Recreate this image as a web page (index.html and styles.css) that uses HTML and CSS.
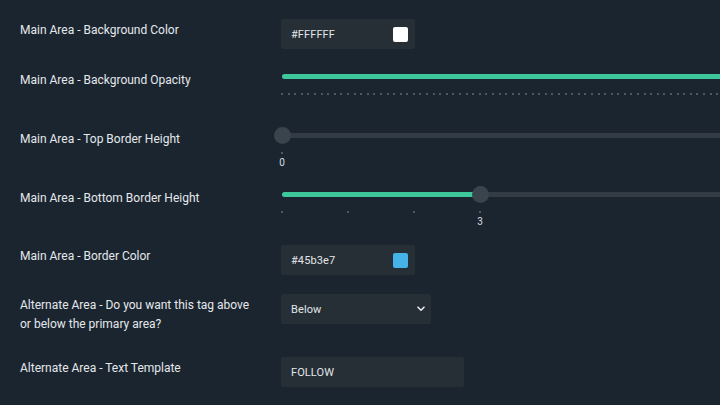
FILE: index.html
```html
<!DOCTYPE html>
<html>
<head>
<meta charset="utf-8">
<link rel="stylesheet" href="styles.css">
</head>
<body>
<div class="form">
  <div class="row">
    <div class="label">Main Area - Background Color</div>
    <div class="control">
      <div class="color-input"><span class="value">#FFFFFF</span><span class="swatch swatch-white"></span></div>
    </div>
  </div>

  <div class="row">
    <div class="label label-slider">Main Area - Background Opacity</div>
    <div class="control">
      <div class="slider">
        <div class="track"><div class="fill" style="width:100%"></div></div>
        <div class="ticks ticks-full" id="ticks-opacity"></div>
      </div>
    </div>
  </div>

  <div class="row">
    <div class="label label-slider">Main Area - Top Border Height</div>
    <div class="control">
      <div class="slider">
        <div class="track"><div class="knob" style="left:0px"></div></div>
        <div class="ticks"><span class="tick"></span></div>
        <div class="tick-labels"><span class="tick-label" style="left:0px">0</span></div>
      </div>
    </div>
  </div>

  <div class="row">
    <div class="label label-slider">Main Area - Bottom Border Height</div>
    <div class="control">
      <div class="slider">
        <div class="track"><div class="fill" style="width:198px"></div><div class="knob" style="left:198px"></div></div>
        <div class="ticks ticks-step"><span class="tick"></span><span class="tick"></span><span class="tick"></span><span class="tick"></span></div>
        <div class="tick-labels"><span class="tick-label" style="left:198px">3</span></div>
      </div>
    </div>
  </div>

  <div class="row row-after-slider">
    <div class="label">Main Area - Border Color</div>
    <div class="control">
      <div class="color-input"><span class="value">#45b3e7</span><span class="swatch swatch-blue"></span></div>
    </div>
  </div>

  <div class="row row-tall">
    <div class="label">Alternate Area - Do you want this tag above or below the primary area?</div>
    <div class="control">
      <div class="select"><span class="value">Below</span>
        <svg class="chevron" width="8" height="6" viewBox="0 0 8 6"><path d="M1 1.2 L4 4.2 L7 1.2" fill="none" stroke="#e8ebee" stroke-width="1.6" stroke-linecap="round" stroke-linejoin="round"/></svg>
      </div>
    </div>
  </div>

  <div class="row">
    <div class="label">Alternate Area - Text Template</div>
    <div class="control">
      <div class="text-input"><span class="value">FOLLOW</span></div>
    </div>
  </div>
</div>
<script>
  var t = document.getElementById('ticks-opacity');
  for (var i = 0; i <= 100; i++) { var s = document.createElement('span'); s.className = 'tick'; t.appendChild(s); }
</script>
</body>
</html>
```

FILE: styles.css
```css
html, body {
  margin: 0;
  padding: 0;
  background: #1b2530;
  overflow: hidden;
}
body {
  width: 720px;
  height: 405px;
  font-family: Roboto, "Liberation Sans", sans-serif;
  color: #e4e8eb;
}
.form {
  display: flex;
  flex-direction: column;
  gap: 18px;
  padding: 19px 0 0 20px;
}
.row {
  display: grid;
  grid-template-columns: 261px 660px;
  align-items: start;
}
.row-after-slider {
  margin-top: 1px;
}
.row-tall {
  margin-top: 1px;
  margin-bottom: 5px;
}
.label {
  font-size: 12px;
  line-height: 19px;
  padding-top: 2px;
  width: 232px;
}
.label-slider {
  padding-top: 4px;
}
.control {
  display: flex;
}
.color-input, .select, .text-input {
  height: 30px;
  background: #262e36;
  border-radius: 2px;
  display: flex;
  align-items: center;
  justify-content: space-between;
  box-sizing: border-box;
  padding: 0 7px 0 10px;
  font-size: 11px;
  color: #e2e6e9;
}
.color-input { width: 134px; }
.select { width: 150px; padding-right: 6px; }
.text-input { width: 183px; }
.value { letter-spacing: 0.1px; }
.swatch {
  width: 15px;
  height: 15px;
  border-radius: 2px;
}
.swatch-white { background: #ffffff; }
.swatch-blue { background: #45b3e7; }
.chevron { margin-top: -1px; }

.slider {
  width: 660px;
  height: 41px;
  padding-left: 1px;
}
.track {
  position: relative;
  height: 5px;
  margin-top: 7px;
  background: #333c45;
  border-radius: 3px;
}
.fill {
  height: 5px;
  background: #3ec79b;
  border-radius: 3px;
}
.knob {
  position: absolute;
  top: -6px;
  width: 17px;
  height: 17px;
  margin-left: -8px;
  border-radius: 50%;
  background: #3a444d;
}
.ticks {
  display: flex;
  width: 662px;
  margin-left: -1px;
  margin-top: 14px;
}
.ticks-full {
  justify-content: space-between;
}
.ticks-step {
  gap: 64px;
}
.tick {
  width: 2px;
  height: 2px;
  border-radius: 1px;
  background: #5f6a74;
}
.tick-labels {
  position: relative;
  height: 12px;
  margin-top: 3px;
}
.tick-label {
  position: absolute;
  top: 0;
  width: 20px;
  margin-left: -10px;
  text-align: center;
  font-size: 10px;
  line-height: 12px;
  color: #d8dde1;
}
```
